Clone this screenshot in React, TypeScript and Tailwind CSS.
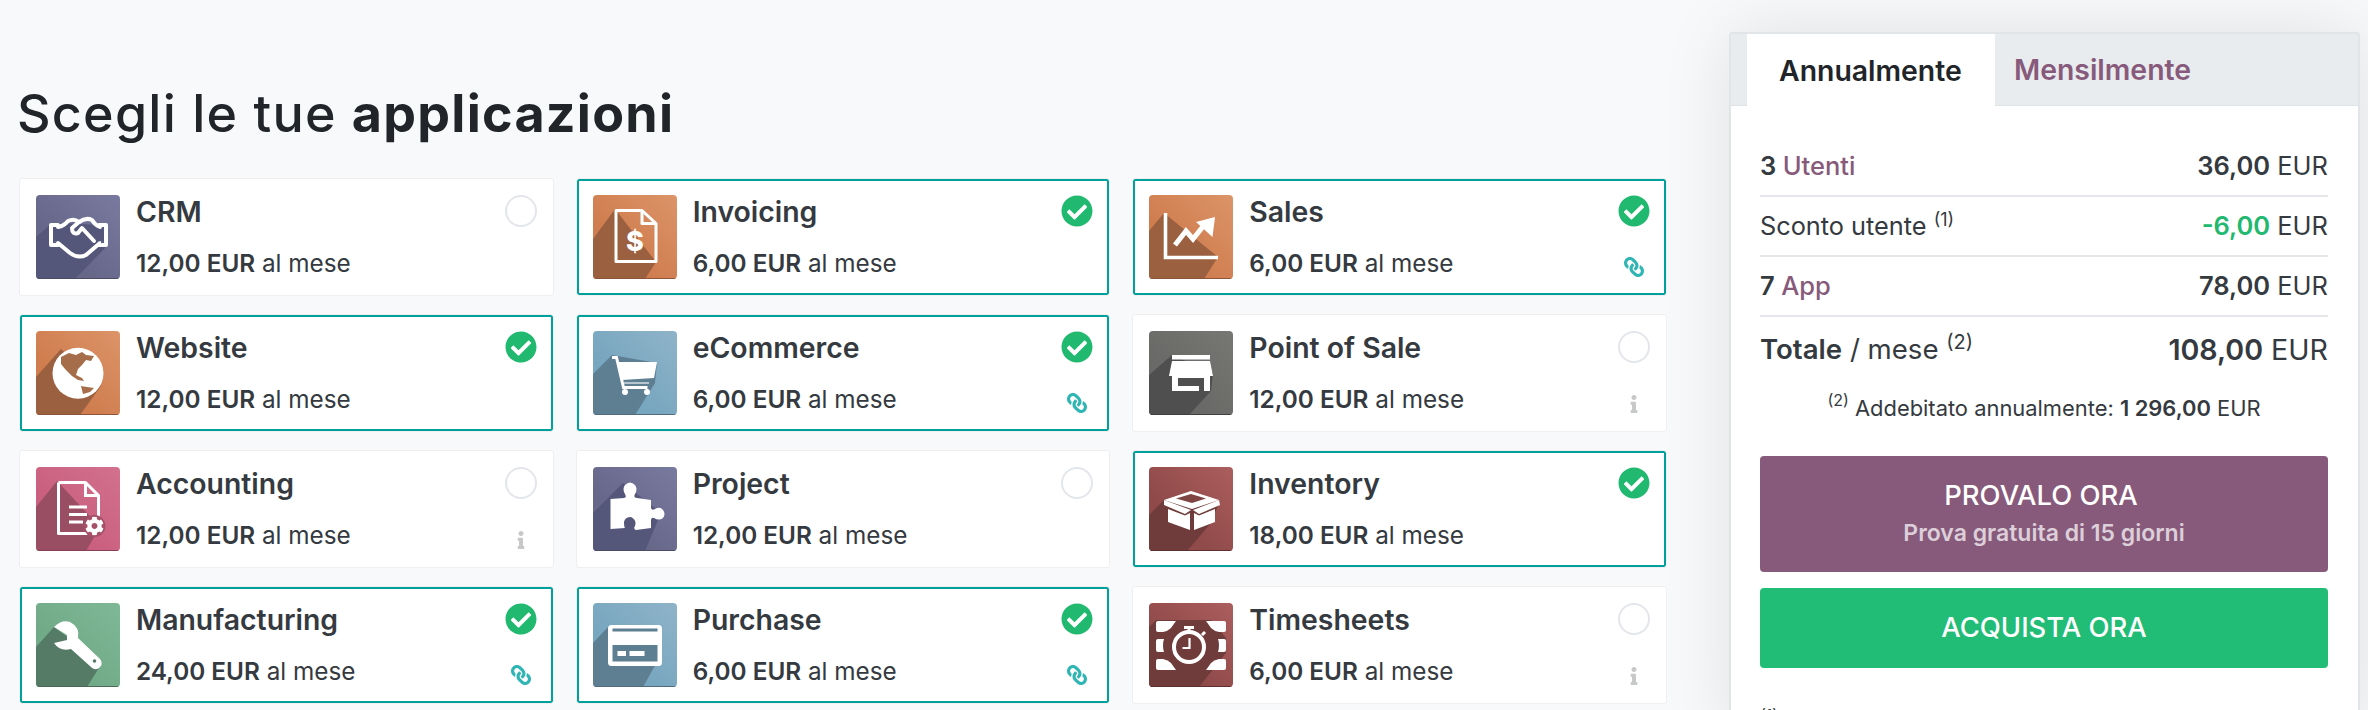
import React from "react";
import { FaCheckCircle, FaLink, FaInfo, FaCog } from "react-icons/fa";

type IconDef = { id: string; a: string; b: string; s: string; edge: string; poly: string; glyph: React.ReactNode };

const W = "#ffffff";

const handshake = (
  <>
    <g fill="none" stroke={W} strokeWidth="4" strokeLinejoin="round" strokeLinecap="round">
      <path d="M22 30 H15 V50 H22" />
      <path d="M63 30 H70 V50 H63" />
      <path d="M22 32 Q28 31 32 26 Q38 23 43 27" />
      <path d="M43 27 Q50 22 56 25 Q59 30 64 32" />
      <path d="M43 27 L36 33 Q36 40 42 38 L46 33 L58 46" />
      <path d="M22 48 L34 58 Q42 64 50 60 L64 48" />
    </g>
    <circle cx="19" cy="47" r="1.2" fill="#666789" />
    <circle cx="66" cy="47" r="1.2" fill="#666789" />
  </>
);

const doc = (x: number, y: number, w: number, h: number) => (
  <g fill="none" stroke={W} strokeWidth="3" strokeLinejoin="round">
    <path d={`M${x} ${y} h${w - 14} l14 13 v${h - 13} h${-w} z`} />
    <path d={`M${x + w - 14} ${y} v13 h14`} />
  </g>
);

const ICONS: Record<string, IconDef> = {
  crm: { id: "crm", a: "#797a9f", b: "#666789", s: "#55577a", edge: "#4b4c66", poly: "0,42 16,28 70,30 70,52 39,84 0,84", glyph: handshake },
  web: {
    id: "web", a: "#dc9468", b: "#cf7d4f", s: "#9b6040", edge: "#8c553a", poly: "0,46 25,18 65,55 44,84 0,84",
    glyph: (
      <>
        <circle cx="42" cy="42.3" r="25.5" fill={W} />
        <path d="M25 26 L33 22 L40 24 L46 21 L50 24 L58 25 L55 30 L50 29 L46 34 L42 38 L40 44 L46 47 L48 50 L42 49 L36 45 L29 38 L25 33 Z" fill="#a66d4b" />
        <path d="M45 55 L51 56 L58 57 L54 61 L47 63 Z" fill="#a66d4b" />
      </>
    ),
  },
  inv: {
    id: "inv", a: "#dc9468", b: "#cf7d4f", s: "#9b6040", edge: "#8c553a", poly: "0,44 22,14 63,67 52,84 0,84",
    glyph: (
      <>
        {doc(23, 15.5, 40, 51)}
        <text x="42" y="56" textAnchor="middle" fontSize="27" fontWeight="800" fontFamily="Inter, sans-serif" fill={W}>$</text>
      </>
    ),
  },
  sal: {
    id: "sal", a: "#dc9468", b: "#cf7d4f", s: "#9b6040", edge: "#8c553a", poly: "0,36 15,18 69,62 55,84 0,84",
    glyph: (
      <>
        <path d="M16.5 18 V62.5 H69" fill="none" stroke={W} strokeWidth="3.6" />
        <path d="M26 50 L37 36 L44 44 L56 29" fill="none" stroke={W} strokeWidth="5" />
        <polygon points="47,27 66,22 63.5,42" fill={W} />
      </>
    ),
  },
  eco: {
    id: "eco", a: "#8fb3c9", b: "#77a6bf", s: "#5e7e92", edge: "#4f6b7c", poly: "0,43 19,24 64,32 62,52 42,84 0,84",
    glyph: (
      <>
        <path d="M19 26.5 h4.5 l7 30 h24" fill="none" stroke={W} strokeWidth="3" />
        <polygon points="25,31 64,31 61,47 29,49" fill={W} />
        <rect x="31" y="51" width="25" height="2" fill={W} opacity="0.55" />
        <circle cx="32" cy="61" r="3" fill={W} />
        <circle cx="54" cy="61" r="3" fill={W} />
      </>
    ),
  },
  pos: {
    id: "pos", a: "#777774", b: "#696967", s: "#4f4f4f", edge: "#404040", poly: "0,44 23,24 64,42 62,60 40,84 0,84",
    glyph: (
      <>
        <rect x="23" y="24" width="38" height="4.5" fill={W} />
        <polygon points="23,30 61,30 64,45 20,45" fill={W} />
        <path fillRule="evenodd" d="M23 45 H61 V60 H55 V47 H29 V55 H50 V60 H23 Z" fill={W} />
      </>
    ),
  },
  acc: {
    id: "acc", a: "#d2718f", b: "#ca5f7f", s: "#9a4e63", edge: "#863f54", poly: "0,40 21,14 64,60 50,84 0,84",
    glyph: (
      <>
        <path d="M22.5 15.5 h27 l13 13 v34 M63 30 M22.5 15.5 v51 h29" fill="none" stroke={W} strokeWidth="3" strokeLinejoin="round" />
        <path d="M49.5 15.5 v13 h13" fill="none" stroke={W} strokeWidth="3" />
        <path d="M33 40 h18 M33 47.5 h18 M33 55 h14" stroke={W} strokeWidth="3.2" />
        <circle cx="58.5" cy="59" r="11" fill="#a65069" />
        <FaCog x={49} y={49.5} size={19} color="#fff" />
      </>
    ),
  },
  prj: {
    id: "prj", a: "#797a9f", b: "#666789", s: "#55577a", edge: "#4b4c66", poly: "0,46 30,16 68,46 52,84 0,84",
    glyph: (
      <path d="M17.5 32 L31 31 Q34 31 32 27 Q29 22 32 18 Q37 13 42 18 Q45 22 42 27 Q40 31 44 31 L58 33 L58 41 Q59 44 62 42 Q67 39 70 43 Q73 47 70 51 Q66 54 61 51 Q58 50 58 54 L58 61 L43 63 Q40 62 42 59 Q44 53 38 50 Q32 50 31 55 Q31 60 32 61 L17.5 62 Z" fill={W} />
    ),
  },
  stk: {
    id: "stk", a: "#ab5e5d", b: "#8f4a49", s: "#6f3b3b", edge: "#5c3030", poly: "0,48 15,33 70,36 62,56 38,84 0,84",
    glyph: (
      <>
        <polygon points="15,33 42,24 70,33 43,42" fill={W} />
        <polygon points="27,31.5 42,27 57,31.5 43,36" fill="#7f4444" />
        <polygon points="15,33 42,43 36,47 15,38" fill={W} />
        <polygon points="70,33 44,43 50,47 71,38" fill={W} />
        <polygon points="19,42 36,48.5 41,46 41,63 19,55" fill={W} />
        <polygon points="45,46 50,48.5 66,42 66,55 45,63" fill={W} />
      </>
    ),
  },
  mfg: {
    id: "mfg", a: "#7fb896", b: "#70aa87", s: "#557a66", edge: "#486a57", poly: "0,44 18,24 66,60 51,84 0,84",
    glyph: (
      <>
        <path d="M18 24 Q26 16 34 19 Q44 24 42 35 L64 56 Q68 61 63 65 Q59 68 55 64 L35 46 Q24 49 18 40 L31 37 L31 32 Z" fill={W} />
        <circle cx="58.5" cy="58" r="1.8" fill="#557a66" />
      </>
    ),
  },
  pur: {
    id: "pur", a: "#8fb3c9", b: "#77a6bf", s: "#5e7e92", edge: "#4f6b7c", poly: "0,40 15,24 69,50 50,84 0,84",
    glyph: (
      <>
        <rect x="15" y="22" width="54" height="41" rx="3.5" fill={W} />
        <rect x="19.5" y="25.5" width="45" height="3" fill="#5e7e92" />
        <rect x="19.5" y="42" width="45" height="16.5" fill="#5e7e92" />
        <rect x="24.5" y="48" width="8.5" height="5" fill={W} />
        <rect x="36.5" y="48" width="15" height="5" fill={W} />
      </>
    ),
  },
  tim: {
    id: "tim", a: "#ab5e5d", b: "#8f4a49", s: "#6f3b3b", edge: "#5c3030", poly: "0,24 7,17 62,17 77,35 77,50 50,84 0,84",
    glyph: (
      <>
        <path d="M9 18 H27 L22 25 Q19 28 14 29 H9 Q7 29 7 27 V20 Q7 18 9 18 Z" fill={W} />
        <path d="M75 18 H57 L62 25 Q65 28 70 29 H75 Q77 29 77 27 V20 Q77 18 75 18 Z" fill={W} />
        <path d="M9 67 H27 L22 60 Q19 57 14 56 H9 Q7 56 7 58 V65 Q7 67 9 67 Z" fill={W} />
        <path d="M75 67 H57 L62 60 Q65 57 70 56 H75 Q77 56 77 58 V65 Q77 67 75 67 Z" fill={W} />
        <path d="M9 36 H15 Q13 42 15 49 H9 Q7 49 7 47 V38 Q7 36 9 36 Z" fill={W} />
        <path d="M75 36 H69 Q71 42 69 49 H75 Q77 49 77 47 V38 Q77 36 75 36 Z" fill={W} />
        <circle cx="40" cy="44" r="15" fill="none" stroke={W} strokeWidth="4" />
        <rect x="35" y="23" width="10" height="3" fill={W} />
        <rect x="38.5" y="25" width="3" height="4" fill={W} />
        <path d="M53 32 l3 -3" stroke={W} strokeWidth="3" />
        <path d="M40.5 35 v10 h-7" fill="none" stroke={W} strokeWidth="2.2" />
      </>
    ),
  },
};

function AppIcon({ k }: { k: string }) {
  const d = ICONS[k];
  return (
    <div className="w-[84px] h-[84px] shrink-0 rounded-[4px] overflow-hidden">
      <svg width="84" height="84" viewBox="0 0 84 84" className="block">
        <defs>
          <linearGradient id={`g-${d.id}`} x1="0" y1="1" x2="1" y2="0">
            <stop offset="0.35" stopColor={d.b} />
            <stop offset="1" stopColor={d.a} />
          </linearGradient>
        </defs>
        <rect width="84" height="84" fill={`url(#g-${d.id})`} />
        <polygon points={d.poly} fill={d.s} />
        <rect y="83" width="84" height="1" fill={d.edge} />
        {d.glyph}
      </svg>
    </div>
  );
}

type App = { k: string; name: string; price: string; on: boolean; sub?: "link" | "info" };

const APPS: App[] = [
  { k: "crm", name: "CRM", price: "12,00", on: false },
  { k: "inv", name: "Invoicing", price: "6,00", on: true },
  { k: "sal", name: "Sales", price: "6,00", on: true, sub: "link" },
  { k: "web", name: "Website", price: "12,00", on: true },
  { k: "eco", name: "eCommerce", price: "6,00", on: true, sub: "link" },
  { k: "pos", name: "Point of Sale", price: "12,00", on: false, sub: "info" },
  { k: "acc", name: "Accounting", price: "12,00", on: false, sub: "info" },
  { k: "prj", name: "Project", price: "12,00", on: false },
  { k: "stk", name: "Inventory", price: "18,00", on: true },
  { k: "mfg", name: "Manufacturing", price: "24,00", on: true, sub: "link" },
  { k: "pur", name: "Purchase", price: "6,00", on: true, sub: "link" },
  { k: "tim", name: "Timesheets", price: "6,00", on: false, sub: "info" },
];

function Card({ a }: { a: App }) {
  return (
    <div
      className={`h-[118px] bg-white rounded-[3px] border border-[#efefef] p-4 flex ${
        a.on ? "shadow-[inset_0_0_0_2px_#00a09d]" : ""
      }`}
    >
      <AppIcon k={a.k} />
      <div className="flex-1 ml-4 pt-[1px] flex flex-col justify-between h-[84px]">
        <div className="text-[28.4px] leading-8 font-semibold text-[#343a40]">{a.name}</div>
        <div className="text-[24.3px] leading-8 text-[#343a40]">
          <span className="font-semibold">{a.price} EUR</span> al mese
        </div>
      </div>
      <div className="w-8 h-[84px] flex flex-col items-center justify-between pb-[2px]">
        {a.on ? (
          <FaCheckCircle size={32} color="#21b86f" />
        ) : (
          <div className="w-8 h-8 rounded-full border-2 border-[#e3e6ea]" />
        )}
        {a.sub === "link" && <FaLink size={20} color="#2fb5b3" className="-scale-x-100" />}
        {a.sub === "info" && <FaInfo size={18} color="#c6c8ca" />}
      </div>
    </div>
  );
}

function Row({ children, h = "h-[60px]", line = true }: { children: React.ReactNode; h?: string; line?: boolean }) {
  return (
    <div className={`${h} flex items-center justify-between text-[#343a40] ${line ? "border-b-2 border-[#e4e6e9]" : ""}`}>
      {children}
    </div>
  );
}

export default function App() {
  return (
    <div className="w-[2368px] h-[710px] overflow-hidden bg-[#f8f9fa] flex font-['Inter',sans-serif]">
      <div className="w-[1729px] shrink-0 pl-[19px]">
        <h1 className="mt-[79px] h-[70px] -ml-[2px] flex items-center text-[52px] leading-[70px] font-medium tracking-[1.25px] text-[#212529] whitespace-pre">
          Scegli le tue <b className="font-bold">applicazioni</b>
        </h1>
        <div className="mt-[29px] w-[1648px] grid grid-cols-3 gap-x-[22px] gap-y-[18px]">
          {APPS.map((a) => (
            <Card key={a.k} a={a} />
          ))}
        </div>
      </div>
      <div className="mt-[32px] w-[631px] h-[700px] shrink-0 bg-white border-2 border-[#e2e5e8] rounded-[3px] shadow-[0_0_70px_rgba(0,0,0,0.1)]">
        <div className="h-[72px] bg-[#e9ecef] border-b border-[#e0e3e6] pl-[16px] flex">
          <div className="w-[248px] h-[72px] bg-white pl-[32px] pt-[2px] flex items-center text-[28.4px] font-semibold text-[#212529]">
            Annualmente
          </div>
          <div className="pl-[19px] pt-[2px] flex items-center text-[28.4px] font-semibold text-[#875a7b]">Mensilmente</div>
        </div>
        <div className="pl-[29px] pr-[30px] pt-[31px]">
          <Row>
            <span className="text-[25.5px] font-semibold">
              3 <span className="text-[#875a7b] font-medium">Utenti</span>
            </span>
            <span className="text-[25.5px]">
              <b className="font-semibold">36,00</b> EUR
            </span>
          </Row>
          <Row>
            <span className="text-[25.3px]">
              Sconto utente <sup className="text-[18px]">(1)</sup>
            </span>
            <span className="text-[25.5px]">
              <b className="font-semibold text-[#21b86f]">-6,00</b> EUR
            </span>
          </Row>
          <Row>
            <span className="text-[25.5px] font-semibold">
              7 <span className="text-[#875a7b] font-medium">App</span>
            </span>
            <span className="text-[25.5px]">
              <b className="font-semibold">78,00</b> EUR
            </span>
          </Row>
          <Row h="h-[66px]" line={false}>
            <span className="text-[27.6px]">
              <b className="font-semibold">Totale</b> / mese <sup className="text-[20px]">(2)</sup>
            </span>
            <span className="text-[28.6px]">
              <b className="font-semibold">108,00</b> EUR
            </span>
          </Row>
          <div className="mt-[9px] h-[32px] flex items-center justify-center text-[21.9px] text-[#343a40] whitespace-pre">
            <sup className="text-[16px]">(2)</sup> Addebitato annualmente: <b className="font-semibold">1 296,00</b> EUR
          </div>
          <div className="mt-[32px] h-[116px] rounded-[4px] bg-[#875a7b] flex flex-col items-center justify-center text-white">
            <span className="text-[27.4px] leading-[38px] font-medium pr-[6px]">PROVALO ORA</span>
            <span className="text-[23px] leading-[38px] font-semibold text-[#dccfd9]">Prova gratuita di 15 giorni</span>
          </div>
          <div className="mt-[16px] h-[80px] rounded-[4px] bg-[#21bc75] flex items-center justify-center text-[27.4px] font-medium text-white">
            ACQUISTA ORA
          </div>
          <div className="mt-[35px] text-[16px] text-[#343a40]">(1)</div>
        </div>
      </div>
    </div>
  );
}
